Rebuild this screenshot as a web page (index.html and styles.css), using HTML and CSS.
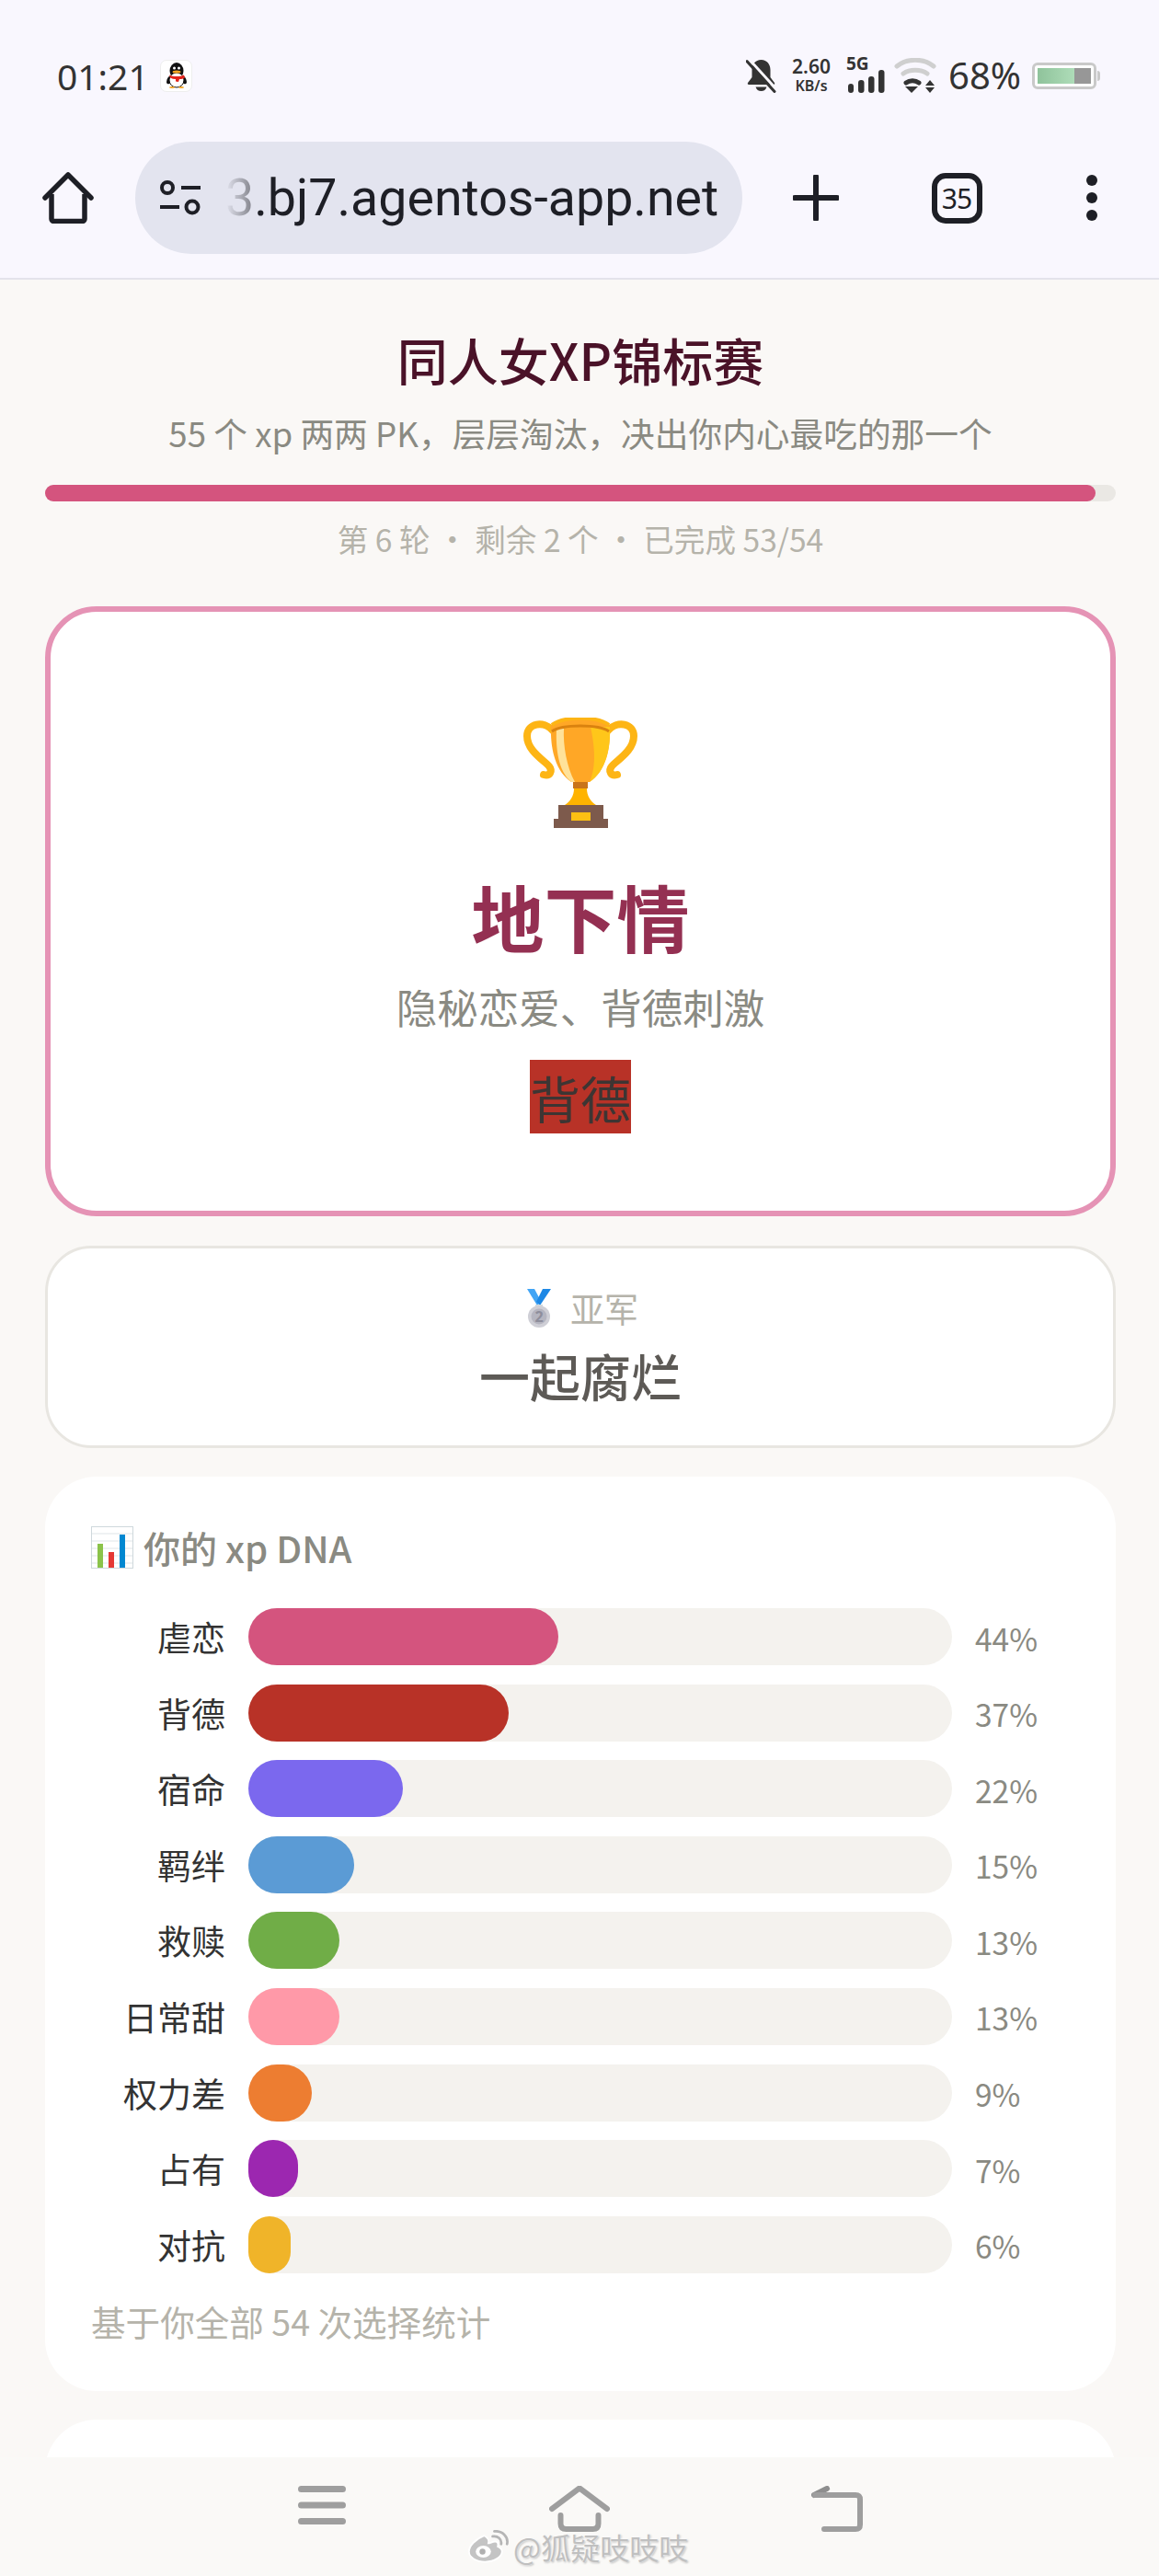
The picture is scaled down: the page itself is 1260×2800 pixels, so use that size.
FILE: index.html
```html
<!DOCTYPE html>
<html lang="zh-CN">
<head>
  <meta charset="UTF-8">
  <meta name="viewport" content="width=device-width, initial-scale=1.0">
  <title>同人女XP锦标赛</title>
  <link rel="stylesheet" href="styles.css">
</head>
<body>
  <header class="chrome">
    <div class="status-bar">
      <div class="status-left">
        <span class="clock">01:21</span>
        <span class="qq-tile">
          <svg width="24" height="28" viewBox="0 0 24 28">
            <ellipse cx="4" cy="19" rx="2.5" ry="4.5" fill="#111" transform="rotate(20 4 19)"/>
            <ellipse cx="20" cy="19" rx="2.5" ry="4.5" fill="#111" transform="rotate(-20 20 19)"/>
            <ellipse cx="12" cy="9" rx="7.5" ry="9" fill="#111"/>
            <ellipse cx="12" cy="19" rx="8" ry="8" fill="#fff" stroke="#111" stroke-width="1"/>
            <path d="M4 13.5c5 2 11 2 16 0l1 3c-2 1-4 1.500-5 1.500l-1 0-1 3-3-.5 0-2.500c-2 0-4-.5-6-1.500z" fill="#e2231a"/>
            <ellipse cx="12" cy="10" rx="4.500" ry="1.600" fill="#f5a623"/>
            <circle cx="9.500" cy="6" r="1.500" fill="#fff"/>
            <circle cx="14.500" cy="6" r="1.500" fill="#fff"/>
            <ellipse cx="7" cy="27" rx="3" ry="1" fill="#f5a623"/>
            <ellipse cx="17" cy="27" rx="3" ry="1" fill="#f5a623"/>
          </svg>
        </span>
      </div>
      <div class="status-right">
        <svg width="33" height="38" viewBox="0 0 33 38">
          <path d="M16.500 2c-6.500 0-10 5-10 11v8L2 27c-.6 1 0 2 1.200 2h26.600c1.200 0 1.800-1 1.200-2l-4.500-6v-8c0-6-3.500-11-10-11z" fill="#333"/>
          <path d="M10.500 31.500h12c-1 3-3 4.500-6 4.500s-5-1.500-6-4.500z" fill="#333"/>
          <path d="M3 1l30 33" stroke="#f9f7fe" stroke-width="3"/>
          <path d="M1 3.500l30 33" stroke="#333" stroke-width="3" stroke-linecap="round"/>
        </svg>
        <div class="speed">
          <span class="speed-num">2.60</span>
          <span class="speed-unit">KB/s</span>
        </div>
        <div class="signal">
          <span class="signal-type">5G</span>
          <svg class="signal-bars" width="42" height="26" viewBox="0 0 42 26">
            <rect x="2" y="15" width="6" height="10" rx="3" fill="#333"/>
            <rect x="13" y="11" width="6.500" height="14" rx="3" fill="#333"/>
            <rect x="24" y="7" width="6.500" height="18" rx="3" fill="#333"/>
            <rect x="35" y="0" width="6.500" height="25" rx="3" fill="#333"/>
          </svg>
        </div>
        <svg width="46" height="38" viewBox="0 0 46 38">
          <path d="M3 9c11-9 29-9 40 0" fill="none" stroke="#cfcfcf" stroke-width="5" stroke-linecap="round"/>
          <path d="M10 17c7-5 19-5 26 0" fill="none" stroke="#cfcfcf" stroke-width="5" stroke-linecap="round"/>
          <path d="M13 27c4-3 10-3 14 0" fill="none" stroke="#333" stroke-width="5" stroke-linecap="round"/>
          <path d="M12 31h14l-7 7z" fill="#333"/>
          <path d="M39 24l5 6h-10zM39 38l-5-6h10z" fill="#333"/>
        </svg>
        <span class="battery-pct">68%</span>
        <span class="battery"><span class="battery-fill"></span><span class="battery-rest"></span></span>
      </div>
    </div>
    <div class="toolbar">
      <svg width="56" height="56" viewBox="0 0 56 56">
        <path d="M3 28L28 3l25 25" fill="none" stroke="#1e1f26" stroke-width="5.500" stroke-linecap="round" stroke-linejoin="round"/>
        <path d="M10 24v27a2.500 2.500 0 0 0 2.500 2.500h31a2.500 2.500 0 0 0 2.500-2.500V24" fill="none" stroke="#1e1f26" stroke-width="5.500"/>
      </svg>
      <div class="url-pill">
        <svg width="46" height="38" viewBox="0 0 46 38">
          <circle cx="9" cy="8" r="6" fill="none" stroke="#1e1f26" stroke-width="4"/>
          <path d="M24 8h21M1 29h21" stroke="#1e1f26" stroke-width="4"/>
          <circle cx="36" cy="29" r="6.500" fill="none" stroke="#1e1f26" stroke-width="4"/>
        </svg>
        <span class="url-text"><span class="url-fade">3</span>.bj7.agentos-app.net</span>
      </div>
      <svg width="50" height="50" viewBox="0 0 50 50">
        <path d="M25 2v46M2 25h46" stroke="#1e1f26" stroke-width="6" stroke-linecap="round"/>
      </svg>
      <span class="tab-count">35</span>
      <svg width="14" height="52" viewBox="0 0 14 52">
        <circle cx="7" cy="7" r="6" fill="#1e1f26"/>
        <circle cx="7" cy="26" r="6" fill="#1e1f26"/>
        <circle cx="7" cy="45" r="6" fill="#1e1f26"/>
      </svg>
    </div>
  </header>

  <main class="page">
    <h1 class="title">同人女XP锦标赛</h1>
    <p class="subtitle">55 个 xp 两两 PK，层层淘汰，决出你内心最吃的那一个</p>
    <div class="progress"><div class="progress-fill" style="width: 98.1%"></div></div>
    <p class="round-info">第 6 轮 · 剩余 2 个 · 已完成 53/54</p>

    <section class="winner">
      <svg class="trophy" width="124" height="120" viewBox="0 0 124 120">
        <path d="M32 14C22 3 4 6 4 20c0 16 18 26 24 33 4 5 1 11-6 9" fill="none" stroke="#fdb515" stroke-width="8" stroke-linecap="round"/>
        <path d="M92 14c10-11 28-8 28 6 0 16-18 26-24 33-4 5-1 11 6 9" fill="none" stroke="#fdb515" stroke-width="8" stroke-linecap="round"/>
        <path d="M30 8c14-10 50-10 64 0 1 24-4 50-22 62H52C34 58 29 32 30 8z" fill="#ffa726"/>
        <path d="M73 10h21c1 24-4 48-22 60 8-18 5-41 1-60z" fill="#ffc61a"/>
        <path d="M36 12h8c-1 18 3 42 12 58h-4C38 58 35 34 36 12z" fill="#ffe29a"/>
        <path d="M31 15C42 7 82 7 93 15" fill="none" stroke="#d9820f" stroke-width="3"/>
        <path d="M31 8C45 -2 79 -2 93 8" fill="none" stroke="#fdb515" stroke-width="4"/>
        <path d="M54 70h16v7H54z" fill="#c9741a"/>
        <path d="M55 77h14c0 8 4 14 10 18H45c6-4 10-10 10-18z" fill="#ffb300"/>
        <path d="M38 95h49v15H38z" fill="#7d5a4c"/>
        <path d="M33 110h59v10H33z" fill="#7d5a4c"/>
        <path d="M52 103h21v9H52z" fill="#fdc013"/>
      </svg>
      <h2 class="winner-name">地下情</h2>
      <p class="winner-desc">隐秘恋爱、背德刺激</p>
      <span class="winner-tag">背德</span>
    </section>

    <section class="runner-up">
      <p class="runner-label">
        <svg width="26" height="42" viewBox="0 0 26 42">
          <path d="M0 0h8l7 13-4 5z" fill="#42a5f5"/>
          <path d="M26 0h-9l-7 14 4 4z" fill="#1e88e5"/>
          <path d="M9 17h8v5H9z" fill="#cfd8dc"/>
          <circle cx="13" cy="30" r="12" fill="#cfcfd6"/>
          <circle cx="13" cy="30" r="8.500" fill="#b5b5c0"/>
          <text x="13" y="36" text-anchor="middle" class="medal-num">2</text>
        </svg>
        亚军
      </p>
      <p class="runner-name">一起腐烂</p>
    </section>

    <section class="dna">
      <h3 class="dna-title">
        <svg width="46" height="46" viewBox="0 0 46 46">
          <rect x="0.500" y="0.500" width="45" height="45" fill="#fff" stroke="#cfd8dc"/>
          <path d="M1 8h44M1 16h44M1 24h44M1 32h44M1 40h44" stroke="#dfe5e8" stroke-width="1"/>
          <rect x="7" y="19" width="6" height="26" fill="#8bc34a"/>
          <rect x="19" y="28" width="6" height="17" fill="#e53935"/>
          <rect x="31" y="9" width="6" height="36" fill="#0288d1"/>
        </svg>
        你的 xp DNA
      </h3>
      <div class="bars">
        <div class="bar-row">
          <span class="bar-label">虐恋</span>
          <div class="bar-track"><div class="bar-fill c-nue" style="width: 44%"></div></div>
          <span class="bar-pct">44%</span>
        </div>
        <div class="bar-row">
          <span class="bar-label">背德</span>
          <div class="bar-track"><div class="bar-fill c-bei" style="width: 37%"></div></div>
          <span class="bar-pct">37%</span>
        </div>
        <div class="bar-row">
          <span class="bar-label">宿命</span>
          <div class="bar-track"><div class="bar-fill c-su" style="width: 22%"></div></div>
          <span class="bar-pct">22%</span>
        </div>
        <div class="bar-row">
          <span class="bar-label">羁绊</span>
          <div class="bar-track"><div class="bar-fill c-ji" style="width: 15%"></div></div>
          <span class="bar-pct">15%</span>
        </div>
        <div class="bar-row">
          <span class="bar-label">救赎</span>
          <div class="bar-track"><div class="bar-fill c-jiu" style="width: 13%"></div></div>
          <span class="bar-pct">13%</span>
        </div>
        <div class="bar-row">
          <span class="bar-label">日常甜</span>
          <div class="bar-track"><div class="bar-fill c-tian" style="width: 13%"></div></div>
          <span class="bar-pct">13%</span>
        </div>
        <div class="bar-row">
          <span class="bar-label">权力差</span>
          <div class="bar-track"><div class="bar-fill c-quan" style="width: 9%"></div></div>
          <span class="bar-pct">9%</span>
        </div>
        <div class="bar-row">
          <span class="bar-label">占有</span>
          <div class="bar-track"><div class="bar-fill c-zhan" style="width: 7%"></div></div>
          <span class="bar-pct">7%</span>
        </div>
        <div class="bar-row">
          <span class="bar-label">对抗</span>
          <div class="bar-track"><div class="bar-fill c-dui" style="width: 6%"></div></div>
          <span class="bar-pct">6%</span>
        </div>
      </div>
      <p class="dna-note">基于你全部 54 次选择统计</p>
    </section>

    <section class="next-card"></section>
  </main>

  <nav class="nav-bar">
    <svg width="52" height="42" viewBox="0 0 52 42">
      <path d="M3.500 3.500h45M3.500 21h45M3.500 38.500h45" stroke="#9e9e9e" stroke-width="7" stroke-linecap="round"/>
    </svg>
    <svg width="66" height="50" viewBox="0 0 66 50">
      <path d="M3 25L33 2.500 63 25" fill="none" stroke="#9e9e9e" stroke-width="6" stroke-linecap="round" stroke-linejoin="round"/>
      <path d="M12.500 32v9c0 4 2 6 6 6h29c4 0 6-2 6-6v-9" fill="none" stroke="#9e9e9e" stroke-width="6" stroke-linecap="round"/>
    </svg>
    <svg width="56" height="50" viewBox="0 0 56 50">
      <path d="M3 10l14-7" stroke="#8e8e8e" stroke-width="6" stroke-linecap="round"/>
      <path d="M4 10h44c3.500 0 5 1.500 5 5v27c0 3.500-1.500 5-5 5H14" fill="none" stroke="#9e9e9e" stroke-width="6" stroke-linecap="round"/>
    </svg>
  </nav>

  <div class="watermark">
    <svg width="46" height="36" viewBox="0 0 50 38">
      <path d="M20 6C10 10 2 18 2 25c0 7 9 12 19 12 11 0 20-6 20-12 0-4-3-5-5-6 1-3 0-6-3-6-3 0-6 2-8 2 1-3 0-6-5-9z" fill="#c4c4c4" stroke="#fff" stroke-width="2"/>
      <ellipse cx="19" cy="25" rx="9" ry="7" fill="#fff"/>
      <circle cx="18" cy="25" r="3.500" fill="#b0b0b0"/>
      <path d="M30 7c6-1 11 3 10 9M32 1c9-1 17 6 15 15" fill="none" stroke="#b5b5b5" stroke-width="3" stroke-linecap="round"/>
    </svg>
    <span class="watermark-text">@狐疑吱吱吱</span>
  </div>
</body>
</html>
```

FILE: styles.css
```css
* {
  box-sizing: border-box;
}

body {
  margin: 0;
  width: 1260px;
  height: 2800px;
  position: relative;
  display: flex;
  flex-direction: column;
  overflow: hidden;
  background: #faf8f6;
  font-family: "Noto Sans CJK SC", "Noto Sans", sans-serif;
}

p, h1, h2, h3 {
  margin: 0;
}

/* browser chrome */
.chrome {
  height: 304px;
  flex: none;
  background: #f9f7fe;
  border-bottom: 2px solid #e4e3eb;
}

.status-bar {
  height: 154px;
  padding: 28px 68px 18px 62px;
  display: flex;
  justify-content: space-between;
  align-items: center;
  color: #333;
}

.status-left,
.status-right {
  display: flex;
  align-items: center;
}

.clock {
  font-family: "Noto Sans", sans-serif;
  font-size: 39px;
  width: 112px;
}

.qq-tile {
  width: 35px;
  height: 35px;
  background: #fff;
  border: 1px solid #eee;
  border-radius: 7px;
  display: flex;
  align-items: center;
  justify-content: center;
}

.status-right {
  gap: 14px;
}

.speed {
  width: 48px;
  display: flex;
  flex-direction: column;
  align-items: center;
  font-family: "Noto Sans", sans-serif;
  font-weight: 600;
}

.speed-num {
  font-size: 21px;
  line-height: 23px;
}

.speed-unit {
  font-size: 16px;
  line-height: 19px;
}

.signal {
  width: 42px;
  height: 40px;
  margin-right: -4px;
  display: flex;
  flex-direction: column;
  font-family: "Noto Sans", sans-serif;
}

.signal-type {
  font-size: 19px;
  font-weight: 700;
  line-height: 14px;
}

.battery-pct {
  font-family: "Noto Sans", sans-serif;
  font-size: 40px;
  line-height: 40px;
  margin-left: -1px;
}

.battery {
  width: 70px;
  height: 29px;
  margin-left: -2px;
  padding: 3px;
  display: flex;
  background: #fff;
  border: 3px solid #c9c9c9;
  border-radius: 6px;
  position: relative;
}

.battery::after {
  content: "";
  position: absolute;
  right: -7px;
  top: 6px;
  width: 3px;
  height: 11px;
  border-radius: 0 3px 3px 0;
  background: #c9c9c9;
}

.battery-fill {
  flex: 1;
  background: linear-gradient(90deg, #8fc39b, #aedcb8);
}

.battery-rest {
  width: 18px;
  background: #979797;
}

.toolbar {
  display: grid;
  grid-template-columns: 147px 660px 160px 146px 147px;
  justify-items: center;
  align-items: center;
}

.url-pill {
  width: 660px;
  height: 122px;
  padding-left: 26px;
  display: flex;
  align-items: center;
  gap: 26px;
  background: #e3e4ef;
  border-radius: 61px;
}

.url-text {
  font-family: Roboto, sans-serif;
  font-size: 55.500px;
  color: #1e1f26;
  white-space: nowrap;
}

.url-fade {
  color: transparent;
  background: linear-gradient(90deg, #e3e4ef, #7d7e86);
  -webkit-background-clip: text;
  background-clip: text;
}

.tab-count {
  width: 55px;
  height: 55px;
  display: flex;
  align-items: center;
  justify-content: center;
  border: 6px solid #1e1f26;
  border-radius: 15px;
  font-family: "Noto Sans", sans-serif;
  font-size: 30px;
  letter-spacing: -1px;
  color: #1e1f26;
}

/* page */
.page {
  flex: 1;
  min-height: 0;
  overflow: hidden;
  padding: 51px 47px 0 49px;
  text-align: center;
}

.title {
  font-size: 55px;
  line-height: 70px;
  font-weight: 500;
  color: #4a1228;
}

.subtitle {
  margin-top: 20px;
  font-size: 36.700px;
  line-height: 50px;
  color: #8a8a82;
}

.progress {
  margin-top: 32px;
  height: 18px;
  background: #eae8e4;
  border-radius: 9px;
}

.progress-fill {
  height: 100%;
  background: #d4547e;
  border-radius: 9px;
}

.round-info {
  margin-top: 16px;
  font-size: 33.600px;
  line-height: 50px;
  color: #b5b3aa;
}

.winner {
  margin-top: 48px;
  height: 663px;
  padding-top: 115px;
  display: flex;
  flex-direction: column;
  align-items: center;
  background: #fff;
  border: 6px solid #e593b5;
  border-radius: 56px;
}

.trophy {
  flex: none;
}

.winner-name {
  margin-top: 46px;
  font-size: 79px;
  line-height: 100px;
  font-weight: 600;
  color: #943052;
}

.winner-desc {
  margin-top: 18px;
  font-size: 44.500px;
  line-height: 60px;
  color: #8a8a82;
}

.winner-tag {
  margin-top: 28px;
  width: 110px;
  height: 80px;
  background: #b83227;
  color: #3d3533;
  font-size: 55px;
  line-height: 80px;
}

.runner-up {
  margin-top: 32px;
  height: 220px;
  padding-top: 40px;
  background: #fff;
  border: 3px solid #e8e6e1;
  border-radius: 50px;
}

.runner-label {
  display: flex;
  justify-content: center;
  align-items: center;
  gap: 21px;
  padding-left: 5px;
  font-size: 37px;
  line-height: 50px;
  color: #b5b3aa;
}

.medal-num {
  font-family: "Noto Sans", sans-serif;
  font-size: 16px;
  font-weight: 700;
  fill: #8e8e9c;
}

.runner-name {
  margin-top: 12px;
  font-size: 55px;
  line-height: 70px;
  font-weight: 500;
  color: #5d5a56;
}

.dna {
  margin-top: 31px;
  height: 994px;
  padding: 47px 50px 0;
  background: #fff;
  border-radius: 56px;
  text-align: left;
}

.dna-title {
  display: flex;
  align-items: center;
  gap: 11px;
  font-size: 40px;
  line-height: 60px;
  font-weight: 500;
  color: #8a8a82;
}

.bars {
  margin-top: 36px;
  display: flex;
  flex-direction: column;
  gap: 20.600px;
}

.bar-row {
  display: grid;
  grid-template-columns: 146px 765px 1fr;
  column-gap: 25px;
  align-items: center;
}

.bar-label {
  text-align: right;
  font-size: 37px;
  line-height: 62px;
  color: #333;
  white-space: nowrap;
}

.bar-track {
  height: 62px;
  background: #f4f2ee;
  border-radius: 31px;
}

.bar-fill {
  height: 100%;
  border-radius: 31px;
}

.bar-pct {
  padding-top: 2px;
  font-size: 33.500px;
  line-height: 55px;
  color: #8a8a82;
}

.c-nue { background: #d4547e; }
.c-bei { background: #b83227; }
.c-su { background: #7b68ee; }
.c-ji { background: #5b9bd5; }
.c-jiu { background: #70ad47; }
.c-tian { background: #ff99a8; }
.c-quan { background: #ed7d31; }
.c-zhan { background: #9c27b0; }
.c-dui { background: #f0b429; }

.dna-note {
  margin-top: 24px;
  font-size: 37.600px;
  line-height: 56px;
  color: #b5b3aa;
}

.next-card {
  margin-top: 31px;
  height: 300px;
  background: #fff;
  border-radius: 56px;
}

/* system nav */
.nav-bar {
  height: 129px;
  flex: none;
  padding-top: 31px;
  display: grid;
  grid-template-columns: repeat(3, 280px);
  justify-content: center;
  justify-items: center;
  align-items: start;
  background: #faf9f7;
}

.watermark {
  position: absolute;
  left: 508px;
  top: 2748px;
  display: flex;
  align-items: center;
  gap: 4px;
}

.watermark-text {
  font-size: 32px;
  line-height: 40px;
  color: #c0c0c0;
  text-shadow: 0 0 3px #fff, 0 0 3px #fff, 1px 1px 2px #999;
}
```
